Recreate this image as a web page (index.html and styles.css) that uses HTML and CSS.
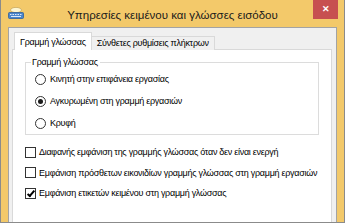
FILE: index.html
```html
<!DOCTYPE html>
<html lang="el">
<head>
    <meta charset="UTF-8">
    <title>Υπηρεσίες κειμένου και γλώσσες εισόδου</title>
    <link rel="stylesheet" href="styles.css">
</head>
<body>
    <div class="window">
        <div class="titlebar">
            <svg class="app-icon" width="16" height="12" viewBox="0 0 16 12">
                <ellipse cx="8" cy="3" rx="5.5" ry="2.6" fill="#fdf6d2" stroke="#c9ab62" stroke-width="0.8"/>
                <rect x="0.5" y="5.5" width="15" height="6" rx="1" fill="#4b86cc" stroke="#2f5f9c" stroke-width="0.8"/>
                <g fill="#dce9f8">
                    <rect x="2" y="7" width="1.5" height="1"/>
                    <rect x="4.5" y="7" width="1.5" height="1"/>
                    <rect x="7" y="7" width="1.5" height="1"/>
                    <rect x="9.5" y="7" width="1.5" height="1"/>
                    <rect x="12" y="7" width="1.5" height="1"/>
                    <rect x="3" y="9" width="10" height="1"/>
                </g>
            </svg>
            <div class="title">Υπηρεσίες κειμένου και γλώσσες εισόδου</div>
            <div class="close">&#x2715;</div>
        </div>
        <div class="client">
            <div class="tabs">
                <div class="tab active">Γραμμή γλώσσας</div>
                <div class="tab">Σύνθετες ρυθμίσεις πλήκτρων</div>
            </div>
            <div class="panel">
                <fieldset class="group">
                    <legend>Γραμμή γλώσσας</legend>
                    <div class="option"><span class="radio"></span>Κινητή στην επιφάνεια εργασίας</div>
                    <div class="option"><span class="radio checked"></span>Αγκυρωμένη στη γραμμή εργασιών</div>
                    <div class="option"><span class="radio"></span>Κρυφή</div>
                </fieldset>
                <div class="checks">
                    <div class="check"><span class="box"></span>Διαφανής εμφάνιση της γραμμής γλώσσας όταν δεν είναι ενεργή</div>
                    <div class="check"><span class="box"></span>Εμφάνιση πρόσθετων εικονιδίων γραμμής γλώσσας στη γραμμή εργασιών</div>
                    <div class="check"><span class="box checked"></span>Εμφάνιση ετικετών κειμένου στη γραμμή γλώσσας</div>
                </div>
            </div>
        </div>
    </div>
</body>
</html>
```

FILE: styles.css
```css
body {
    margin: 0;
    background: #ffffff;
    font-family: 'Liberation Sans', Arial, sans-serif;
    font-size: 9px;
    letter-spacing: -0.28px;
    color: #000000;
}

.window {
    width: 345px;
    height: 223px;
    box-sizing: border-box;
    display: flex;
    flex-direction: column;
    background: #f3c96a;
    border-left: 1px solid #8b8b8b;
    border-right: 1px solid #8b8b8b;
    border-bottom: 1px solid #8b8b8b;
}

.titlebar {
    height: 27px;
    flex: none;
    display: grid;
    grid-template-columns: 1fr auto 1fr;
}

.app-icon {
    margin: 7px 0 0 7px;
}

.title {
    font-size: 11.5px;
    letter-spacing: 0;
    line-height: 12px;
    padding-top: 9px;
    color: #1a1a1a;
}

.close {
    justify-self: end;
    width: 25px;
    height: 19px;
    margin-right: 6px;
    background: #c75050;
    color: #ffffff;
    font-size: 9px;
    font-weight: bold;
    line-height: 19px;
    text-align: center;
}

.client {
    flex: 1;
    margin: 0 7px;
    display: flex;
    flex-direction: column;
    background: #f0f0f0;
    border: 1px solid #a3a3a3;
    border-bottom: none;
}

.tabs {
    display: flex;
    align-items: flex-end;
    margin: 0 4px -1px 3px;
    padding: 4px 0 0 2px;
    position: relative;
    z-index: 1;
}

.tab {
    height: 13px;
    line-height: 13px;
    padding: 0 5px;
    background: #f0f0f0;
    border: 1px solid #d9d9d9;
    border-bottom: none;
    white-space: nowrap;
}

.tab + .tab {
    border-left: none;
}

.tab.active {
    height: 17px;
    line-height: 18px;
    background: #ffffff;
}

.panel {
    flex: 1;
    margin: 0 4px 0 3px;
    background: #ffffff;
    border: 1px solid #d9d9d9;
    border-bottom: none;
}

.group {
    margin: 6px 12px 0 12px;
    padding: 0 0 0 9px;
    border: 1px solid #dcdcdc;
    min-width: 0;
}

.group legend {
    margin-left: -4px;
    padding: 0 2px 0 1px;
    line-height: 12px;
}

.option {
    height: 22px;
    display: flex;
    align-items: center;
}

.radio {
    width: 9px;
    height: 9px;
    margin-right: 4px;
    border: 1px solid #333333;
    border-radius: 50%;
    display: flex;
    align-items: center;
    justify-content: center;
}

.radio.checked::after {
    content: "";
    width: 5px;
    height: 5px;
    border-radius: 50%;
    background: #1a1a1a;
}

.checks {
    margin: 7px 0 0 12px;
}

.check {
    height: 20.5px;
    display: flex;
    align-items: center;
    white-space: nowrap;
}

.box {
    width: 9px;
    height: 9px;
    margin-right: 3px;
    border: 1px solid #333333;
    background: #ffffff;
    position: relative;
}

.box.checked::after {
    content: "";
    position: absolute;
    left: 3px;
    top: 0px;
    width: 2px;
    height: 6px;
    border: solid #000000;
    border-width: 0 2px 2px 0;
    transform: rotate(40deg);
}
```
